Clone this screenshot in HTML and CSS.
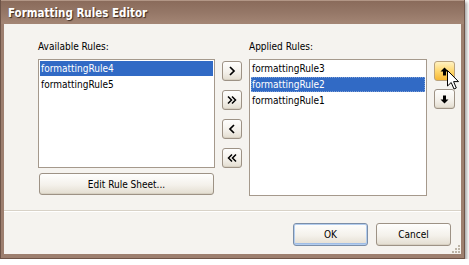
FILE: index.html
```html
<!DOCTYPE html>
<html>
<head>
    <title>Formatting Rules Editor</title>
    <link rel="stylesheet" href="styles.css">
</head>
<body>
    <div class="window">
        <div class="titlebar">
            <span class="title">Formatting Rules Editor</span>
        </div>

        <div class="client">
            <div class="main">
                <div class="col col-left">
                    <div class="caption">Available Rules:</div>
                    <div class="listbox list-left">
                        <div class="item selected">formattingRule4</div>
                        <div class="item">formattingRule5</div>
                    </div>
                    <button class="btn btn-wide">Edit Rule Sheet...</button>
                </div>

                <!-- move buttons between the two lists -->
                <div class="arrows">
                    <button class="btn btn-icon">
                        <svg width="10" height="10" viewBox="0 0 10 10"><polyline points="3,1 7,5 3,9" fill="none" stroke="#000" stroke-width="1.7"/></svg>
                    </button>
                    <button class="btn btn-icon">
                        <svg width="10" height="10" viewBox="0 0 10 10"><polyline points="1,1.5 4.5,5 1,8.5" fill="none" stroke="#000" stroke-width="1.5"/><polyline points="5,1.5 8.5,5 5,8.5" fill="none" stroke="#000" stroke-width="1.5"/></svg>
                    </button>
                    <button class="btn btn-icon">
                        <svg width="10" height="10" viewBox="0 0 10 10"><polyline points="7,1 3,5 7,9" fill="none" stroke="#000" stroke-width="1.7"/></svg>
                    </button>
                    <button class="btn btn-icon">
                        <svg width="10" height="10" viewBox="0 0 10 10"><polyline points="5,1.5 1.5,5 5,8.5" fill="none" stroke="#000" stroke-width="1.5"/><polyline points="9,1.5 5.5,5 9,8.5" fill="none" stroke="#000" stroke-width="1.5"/></svg>
                    </button>
                </div>

                <div class="col col-right">
                    <div class="caption">Applied Rules:</div>
                    <div class="listbox list-right">
                        <div class="item">formattingRule3</div>
                        <div class="item selected focused">formattingRule2</div>
                        <div class="item">formattingRule1</div>
                    </div>
                </div>

                <!-- reorder buttons -->
                <div class="order">
                    <button class="btn btn-icon hot">
                        <svg width="9" height="9" viewBox="0 0 9 9"><polygon points="4.5,0.5 8.5,4.5 6,4.5 6,8.5 3,8.5 3,4.5 0.5,4.5" fill="#000"/></svg>
                    </button>
                    <button class="btn btn-icon">
                        <svg width="9" height="9" viewBox="0 0 9 9"><polygon points="4.5,8.5 8.5,4.5 6,4.5 6,0.5 3,0.5 3,4.5 0.5,4.5" fill="#000"/></svg>
                    </button>
                </div>
            </div>

            <div class="footer">
                <button class="btn btn-dialog default">OK</button>
                <button class="btn btn-dialog">Cancel</button>
            </div>

            <svg class="grip" width="9" height="9" viewBox="0 0 9 9">
                <rect x="7" y="1" width="2" height="2" fill="#bdb5a8"/>
                <rect x="4" y="4" width="2" height="2" fill="#bdb5a8"/>
                <rect x="7" y="4" width="2" height="2" fill="#bdb5a8"/>
                <rect x="1" y="7" width="2" height="2" fill="#bdb5a8"/>
                <rect x="4" y="7" width="2" height="2" fill="#bdb5a8"/>
                <rect x="7" y="7" width="2" height="2" fill="#bdb5a8"/>
            </svg>
        </div>
    </div>

    <!-- mouse pointer over the up button -->
    <svg class="pointer" width="13" height="21" viewBox="0 0 13 21">
        <path d="M0.5,0.5 L0.5,16 L4.2,12.5 L7,19 L9.3,18 L6.6,11.6 L11.5,11.6 Z" fill="#fff" stroke="#000" stroke-width="1" stroke-linejoin="round"/>
    </svg>
</body>
</html>
```

FILE: styles.css
```css
body {
    margin: 0;
    background: #fff;
    font-family: "DejaVu Sans Condensed", "DejaVu Sans", sans-serif;
    font-stretch: condensed;
    font-size: 10px;
    color: #000;
}
.window {
    position: relative;
    width: 465px;
    height: 259px;
    box-sizing: border-box;
    border: 1px solid #6e5448;
    background: #9d7f6f;
    box-shadow: 2px 2px 3px rgba(0, 0, 0, 0.35);
    display: flex;
    flex-direction: column;
}
.titlebar {
    height: 23px;
    background: linear-gradient(#8a6b5b, #957767 50%, #a48675);
    border-top: 1px solid #b29686;
    margin-top: -1px;
    display: flex;
    align-items: center;
    padding-left: 7px;
}
.title {
    font-family: "DejaVu Sans Condensed", "DejaVu Sans", sans-serif;
    font-stretch: condensed;
    font-weight: bold;
    font-size: 11.5px;
    color: #fff;
    text-shadow: 1px 1px 1px #3b2a20;
    margin-top: 1px;
}
.client {
    position: relative;
    margin: 0 3px 3px 3px;
    height: 230px;
    background: #f5f3ef;
    display: flex;
    flex-direction: column;
}
.main {
    height: 186px;
    box-sizing: border-box;
    padding: 16px 0 0 34px;
    display: flex;
    gap: 7px;
}
.col {
    display: flex;
    flex-direction: column;
}
.col-left {
    width: 177px;
}
.col-right {
    width: 178px;
}
.caption {
    height: 13px;
    line-height: 13px;
    margin-bottom: 6px;
}
.listbox {
    box-sizing: border-box;
    border: 1px solid #a5998c;
    background: #fff;
    padding: 1px;
}
.list-left {
    height: 109px;
}
.list-right {
    height: 137px;
}
.item {
    height: 16px;
    line-height: 15px;
    padding-left: 1px;
    box-sizing: border-box;
    white-space: nowrap;
}
.item.selected {
    background: #316ac5;
    color: #fff;
    height: 15px;
    margin-bottom: 1px;
}
.item.focused {
    outline: 1px dotted #7f9fd6;
    outline-offset: -1px;
}
.btn {
    font-family: "DejaVu Sans Condensed", "DejaVu Sans", sans-serif;
    font-stretch: condensed;
    font-size: 10px;
    color: #000;
    box-sizing: border-box;
    border: 1px solid #9d9285;
    border-radius: 3px;
    background: linear-gradient(#fefefd, #f4f1eb 55%, #e3ddd0);
    box-shadow: inset 0 -1px 0 #d8d1c3;
    padding: 0;
    margin: 0;
}
.btn-wide {
    margin-top: 5px;
    width: 175px;
    height: 22px;
    margin-left: 1px;
}
.arrows, .order {
    display: flex;
    flex-direction: column;
    padding-top: 21px;
}
.arrows {
    width: 20px;
    gap: 9px;
}
.order {
    width: 21px;
    gap: 8px;
}
.btn-icon {
    width: 100%;
    height: 20px;
    display: flex;
    align-items: center;
    justify-content: center;
}
.btn-icon.hot {
    border-color: #b9a27c;
    background: linear-gradient(#fff2c2, #ffd870 50%, #f6b733);
    box-shadow: none;
}
.footer {
    flex: 1;
    border-top: 1px solid #d8d2c7;
    box-shadow: inset 0 1px 0 #fff;
    display: flex;
    justify-content: flex-end;
    gap: 8px;
    padding: 12px 10px 0 0;
}
.btn-dialog {
    width: 75px;
    height: 23px;
}
.btn-dialog.default {
    border-color: #7b8ea8;
    box-shadow: inset 0 0 0 1px #b3cdee, inset 0 -2px 0 #9fbde6;
}
.grip {
    position: absolute;
    right: 1px;
    bottom: 1px;
}
.pointer {
    position: absolute;
    left: 447px;
    top: 70px;
}
```
